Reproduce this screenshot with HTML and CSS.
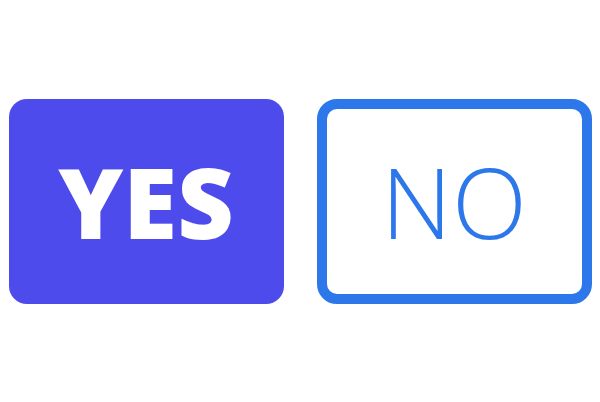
FILE: index.html
```html
<!DOCTYPE html>
<html lang="en">
<head>
<meta charset="utf-8">
<title>Yes / No</title>
<link rel="stylesheet" href="styles.css">
</head>
<body>
<main class="choices">
  <div class="choice choice-yes">YES</div>
  <div class="choice choice-no">NO</div>
</main>
</body>
</html>
```
FILE: styles.css
```css
html, body {
  margin: 0;
  padding: 0;
  background: #ffffff;
}
.choices {
  width: 600px;
  height: 402px;
  display: flex;
  align-items: center;
  justify-content: center;
  gap: 33px;
}
.choice {
  box-sizing: border-box;
  width: 275px;
  height: 205px;
  border-radius: 18px;
  display: flex;
  align-items: center;
  justify-content: center;
  font-family: "Open Sans", "DejaVu Sans", sans-serif;
  font-size: 98px;
  line-height: 1;
}
.choice-yes {
  background: #4d4bec;
  color: #ffffff;
  font-weight: 800;
}
.choice-no {
  background: #ffffff;
  border: 10px solid #2c77e9;
  border-radius: 20px;
  color: #2c77e9;
  font-weight: 300;
}
```
